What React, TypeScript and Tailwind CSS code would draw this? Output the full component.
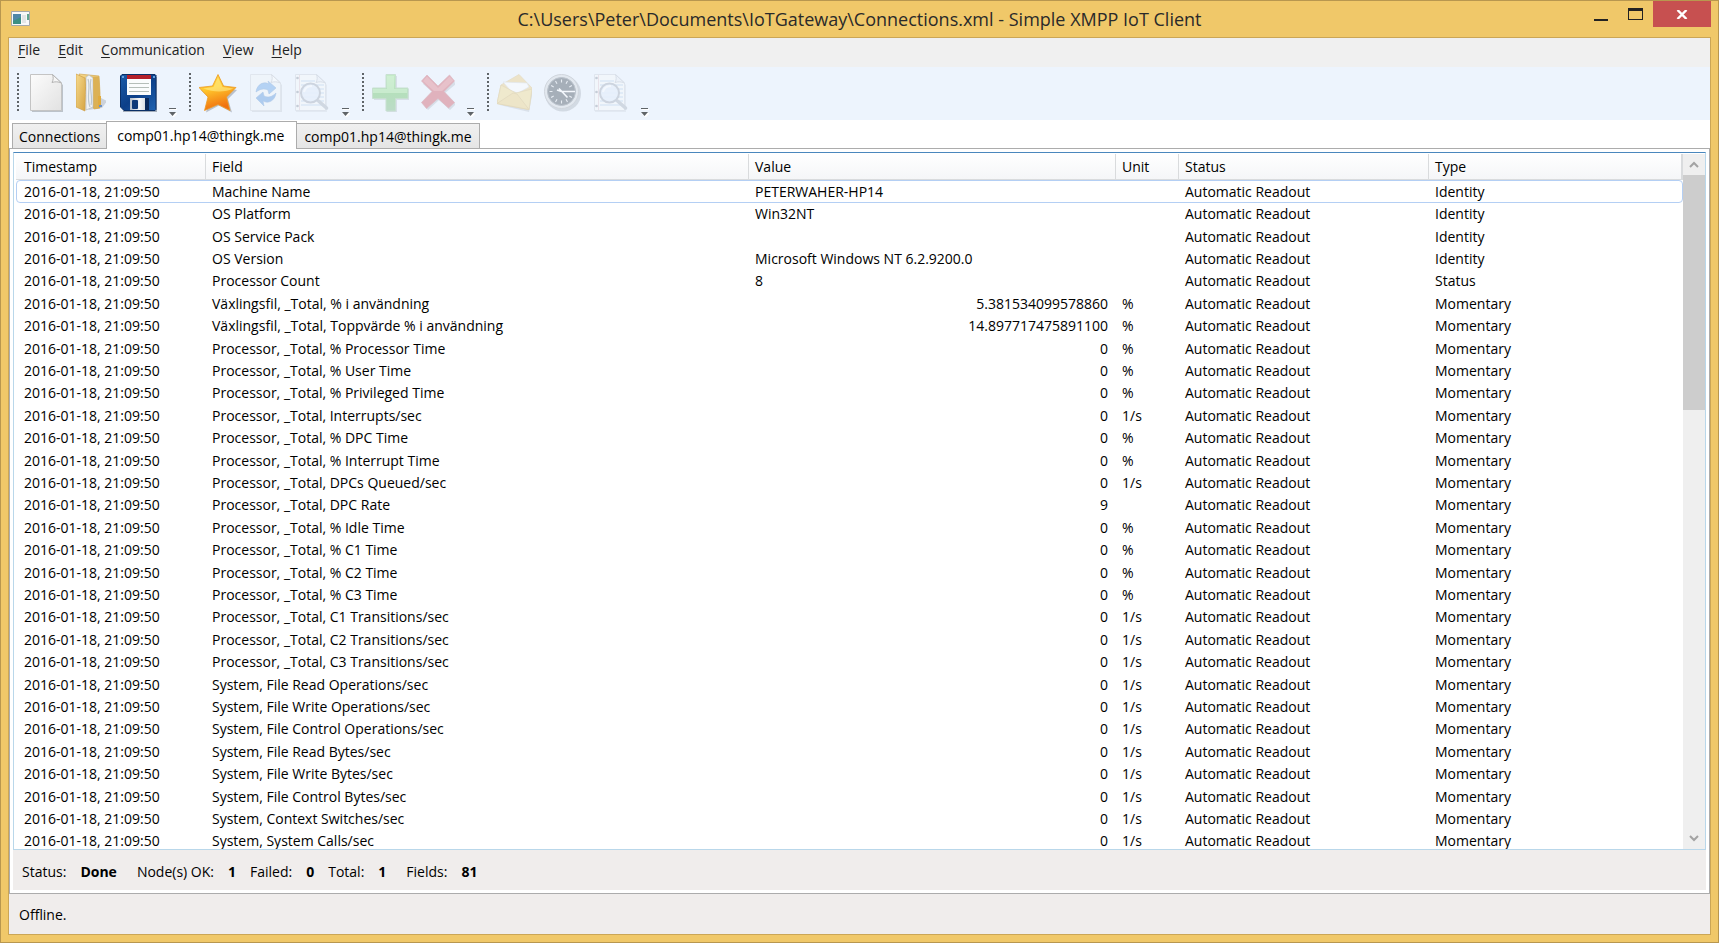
import React from 'react';

type Row = { field: string; value: string; unit: string; type: string; numeric: boolean };

const text = (field: string, value: string, type: string): Row => ({ field, value, unit: '', type, numeric: false });
const num = (field: string, unit: string, value = '0'): Row => ({ field, value, unit, type: 'Momentary', numeric: true });

const rows: Row[] = [
  text('Machine Name', 'PETERWAHER-HP14', 'Identity'),
  text('OS Platform', 'Win32NT', 'Identity'),
  text('OS Service Pack', '', 'Identity'),
  text('OS Version', 'Microsoft Windows NT 6.2.9200.0', 'Identity'),
  text('Processor Count', '8', 'Status'),
  num('Växlingsfil, _Total, % i användning', '%', '5.381534099578860'),
  num('Växlingsfil, _Total, Toppvärde % i användning', '%', '14.897717475891100'),
  num('Processor, _Total, % Processor Time', '%'),
  num('Processor, _Total, % User Time', '%'),
  num('Processor, _Total, % Privileged Time', '%'),
  num('Processor, _Total, Interrupts/sec', '1/s'),
  num('Processor, _Total, % DPC Time', '%'),
  num('Processor, _Total, % Interrupt Time', '%'),
  num('Processor, _Total, DPCs Queued/sec', '1/s'),
  num('Processor, _Total, DPC Rate', '', '9'),
  num('Processor, _Total, % Idle Time', '%'),
  num('Processor, _Total, % C1 Time', '%'),
  num('Processor, _Total, % C2 Time', '%'),
  num('Processor, _Total, % C3 Time', '%'),
  num('Processor, _Total, C1 Transitions/sec', '1/s'),
  num('Processor, _Total, C2 Transitions/sec', '1/s'),
  num('Processor, _Total, C3 Transitions/sec', '1/s'),
  num('System, File Read Operations/sec', '1/s'),
  num('System, File Write Operations/sec', '1/s'),
  num('System, File Control Operations/sec', '1/s'),
  num('System, File Read Bytes/sec', '1/s'),
  num('System, File Write Bytes/sec', '1/s'),
  num('System, File Control Bytes/sec', '1/s'),
  num('System, Context Switches/sec', '1/s'),
  num('System, System Calls/sec', '1/s'),
];

const menus = ['File', 'Edit', 'Communication', 'View', 'Help'];
const columns = ['Timestamp', 'Field', 'Value', 'Unit', 'Status', 'Type'];

function NewIcon() {
  return (
    <svg width="37" height="40" viewBox="0 0 37 40">
      <defs>
        <linearGradient id="paper" x1="0" y1="0" x2="1" y2="1">
          <stop offset="0" stopColor="#fcfcfc" />
          <stop offset="1" stopColor="#e2e2e2" />
        </linearGradient>
      </defs>
      <path d="M5 3h22l9 9v27H5z" fill="#8a8f98" opacity=".5" />
      <path d="M3.500 1.500h22l9 8.500v27.500h-31z" fill="url(#paper)" stroke="#c4c4c4" />
      <path d="M25.500 1.500c1 3 1 5-.5 8 3-1 6-1 9.500.5z" fill="#f6f6f6" stroke="#b3b3b3" />
    </svg>
  );
}

function OpenIcon() {
  return (
    <svg width="30" height="40" viewBox="0 0 30 40">
      <defs>
        <linearGradient id="folder" x1="0" y1="0" x2="1" y2="1">
          <stop offset="0" stopColor="#f7da8d" />
          <stop offset="1" stopColor="#d5a443" />
        </linearGradient>
      </defs>
      <path d="M12 37l14-2 5-7-6-3z" fill="#9aa0a8" opacity=".4" />
      <path d="M3 1l20 2 1 17v15l-6 1z" fill="url(#folder)" stroke="#d3a954" strokeWidth=".7" />
      <path d="M10 4l3-2 4 3v29l-7 3z" fill="#f0f2f4" stroke="#b3bac0" strokeWidth=".7" />
      <path d="M12 6c3 9-2 18 2 28M15 6c-2 9 2 18 0 26" stroke="#bcc7cf" strokeWidth="1.200" fill="none" />
      <path d="M17 4h6l1 17-2 14-4 1z" fill="#dcb155" />
      <path d="M0 1l9 4c1 11 0 22 0 33l-9-4z" fill="url(#folder)" stroke="#cfa04a" strokeWidth=".7" />
      <path d="M22 23h3v9l-2 3h-1z" fill="#e0ab3f" />
      <path d="M23 32h3v2h-3z" fill="#6d92c9" />
    </svg>
  );
}

function SaveIcon() {
  return (
    <svg width="39" height="40" viewBox="0 0 39 40">
      <defs>
        <linearGradient id="disk" x1="0" y1="0" x2="1" y2="1">
          <stop offset="0" stopColor="#1b5ca8" />
          <stop offset=".5" stopColor="#0c3f88" />
          <stop offset="1" stopColor="#1e62b1" />
        </linearGradient>
        <linearGradient id="shutter" x1="0" y1="0" x2="1" y2="0">
          <stop offset="0" stopColor="#b5bfca" />
          <stop offset=".5" stopColor="#f6f8fa" />
          <stop offset="1" stopColor="#c3cbd4" />
        </linearGradient>
      </defs>
      <path d="M4 4h35v35H5z" fill="#5c6675" opacity=".5" />
      <path d="M4 1.500h33l1 1v34l-1 1H6l-3.500-3.500V3z" fill="url(#disk)" stroke="#0a2f66" />
      <path d="M9 2h24v20H9z" fill="#fafcfd" />
      <path d="M9 2h24v4H9z" fill="#b3202a" />
      <path d="M11 10.500h20M11 14.500h20M11 18.500h20" stroke="#b5beb9" />
      <path d="M12 25h19v12H12z" fill="url(#shutter)" />
      <rect x="14" y="27" width="6" height="9" rx="1" fill="#0f3a78" />
      <path d="M27 25h4v12h-4z" fill="#08285a" />
      <path d="M4 3h2v2H4zM35 3h2v2h-2z" fill="#65a0dc" />
    </svg>
  );
}

function StarIcon() {
  return (
    <svg width="38" height="40" viewBox="0 0 38 40">
      <defs>
        <linearGradient id="star" x1="0" y1="0" x2=".3" y2="1">
          <stop offset="0" stopColor="#ffd23c" />
          <stop offset=".45" stopColor="#ffc62c" />
          <stop offset="1" stopColor="#f0700f" />
        </linearGradient>
      </defs>
      <path d="M20 4l6 11 12 2-9 9 4 13.500-13-7-13 7 4-13.500L2 17l13-2z" fill="#6b7280" opacity=".4" />
      <path d="M19 1.500L24.500 13l12.500 1.500-9.500 9.500L31 37.500 19 31.500 5.500 37.500 9 24 0 14.500 13.500 13z" fill="url(#star)" stroke="#ec9a26" strokeWidth=".8" strokeLinejoin="round" />
      <path d="M19 4l4.500 10 11 1.500C27 19 16 20 4 15.500L14.500 14z" fill="#ffec8b" opacity=".6" />
    </svg>
  );
}

function RefreshIcon() {
  return (
    <svg width="33" height="40" viewBox="0 0 33 40" opacity=".38">
      <path d="M2 3h22l9 9v27H3z" fill="#9da4ae" opacity=".5" />
      <path d="M1.500 1.500h21l9 8.500v27.500h-30z" fill="#f2f4f7" stroke="#ccd0d6" />
      <path d="M22.500 1.500c1 3 1 5-.5 8 3-1 6-1 9.500.5z" fill="#fff" stroke="#b8bcc3" />
      <path d="M7 19c1-8 8-11 13-8l-1-3 8 7-7 6-1-4c-4-2-8-1-12 2z" fill="#5a9de6" stroke="#4d87c6" strokeWidth=".6" />
      <path d="M27 20c-1 8-8 11-13 8l1 5-8-8 7-6 1 4c4 2 8 1 12-3z" fill="#4a8ddb" stroke="#4d87c6" strokeWidth=".6" />
    </svg>
  );
}

function InspectIcon() {
  return (
    <svg width="36" height="40" viewBox="0 0 36 40" opacity=".34">
      <path d="M3 3h21l9 9v27H2z" fill="#9da4ae" opacity=".4" />
      <path d="M1.500 1.500h21l9 8.500v27.500h-30z" fill="#fafafa" stroke="#c5cad3" />
      <path d="M22.500 1.500c1 3 1 5-.5 8 3-1 6-1 9.500.5z" fill="#e8ecf2" stroke="#aeb5c0" />
      <path d="M7 8h14M7 12h23M7 16h23M7 20h23M7 24h23M7 28h23M7 32h23" stroke="#98bbe2" />
      <path d="M5.500 2v35" stroke="#d6a6b0" strokeWidth=".7" />
      <g fill="#7b838f"><circle cx="3.500" cy="5" r="1.300" /><circle cx="3.500" cy="19" r="1.300" /><circle cx="3.500" cy="33" r="1.300" /></g>
      <path d="M24.500 28l8 7" stroke="#9aa3af" strokeWidth="3.500" strokeLinecap="round" />
      <circle cx="16.500" cy="20" r="9.500" fill="#dce9f8" fillOpacity=".9" stroke="#9099a6" strokeWidth="2" />
      <path d="M10 19c1-4 4-6 8-6" fill="none" stroke="#fff" strokeWidth="2" />
    </svg>
  );
}

function AddIcon() {
  return (
    <svg width="37" height="40" viewBox="0 0 37 40" opacity=".4">
      <defs>
        <linearGradient id="plus" x1="0" y1="0" x2="0" y2="1">
          <stop offset="0" stopColor="#8be07d" />
          <stop offset=".5" stopColor="#63c25c" />
          <stop offset="1" stopColor="#74b77a" />
        </linearGradient>
      </defs>
      <path d="M15 3h10v13h12v11H25v12H15V27H2V16h13z" fill="#67727f" opacity=".4" />
      <path d="M14 1.500h9.500V15H36v10.500H23.500V38H14V25.500H.5V15H14z" fill="url(#plus)" stroke="#93c492" />
      <path d="M15 3h7v13h13v4H1v-4h14z" fill="#b6f1a8" opacity=".6" />
    </svg>
  );
}

function DeleteIcon() {
  return (
    <svg width="34" height="40" viewBox="0 0 34 40" opacity=".4">
      <path d="M7 4l11 11L29 4l6 7-11 9 11 11-6 6-11-10L7 37l-5-6 11-11L2 11z" fill="#67727f" opacity=".4" />
      <path d="M6 2l11 11L28.500 2l5 6L23 18.500l10.500 11-6 5.500L17 25.500 5.500 35.500l-5-6L11 18.500.5 8z" fill="#cf5260" stroke="#c4636e" strokeWidth=".7" />
      <path d="M6 3.500L17 15 28.500 3.500l4 4L21 18H13L2 8z" fill="#ea8a90" opacity=".65" />
    </svg>
  );
}

function MailIcon() {
  return (
    <svg width="35" height="40" viewBox="0 0 35 40" opacity=".4">
      <path d="M3 32l29 7 4-22-4-2z" fill="#7b818b" opacity=".4" />
      <path d="M4 12L22 1.500 35 15l-3 21.500L0 30.500z" fill="#eccb7c" stroke="#d9bc77" strokeWidth=".8" />
      <path d="M6 9l24 1 2 4-11 6-7-2z" fill="#fff" stroke="#cfd2d6" strokeWidth=".7" />
      <path d="M4 12l15 8 16-4-3 20.500-32-6z" fill="#f2d987" stroke="#d3b468" strokeWidth=".7" />
      <path d="M0 30.500L16 20l4 1 12 15.500z" fill="#eed07a" stroke="#cfae60" strokeWidth=".7" />
    </svg>
  );
}

function ClockIcon() {
  return (
    <svg width="37" height="40" viewBox="0 0 37 40" opacity=".4">
      <circle cx="19" cy="20.500" r="18" fill="#6c7380" opacity=".5" />
      <circle cx="17.500" cy="18.500" r="17" fill="#d4d8dc" stroke="#a4a8ad" />
      <circle cx="17.500" cy="18.500" r="14" fill="#3f4a56" stroke="#747d86" />
      <path d="M17.500 6.500v3M17.500 27.500v3M5.500 18.500h3M11.500 8.100l1.500 2.600M7.100 12.500l2.600 1.500M7.100 24.500l2.600-1.500M11.500 28.900l1.500-2.600M23.500 28.900l-1.500-2.600M27.900 24.500l-2.600-1.500M27.900 12.500l-2.600 1.500M23.500 8.100l-1.500 2.600" stroke="#dfe3e6" strokeWidth="1.100" />
      <path d="M13 17l4.500 1.500h13.500M15 15.500l8.500 9" stroke="#fff" strokeWidth="1.600" fill="none" />
    </svg>
  );
}

const toolbars: { label: string; Icon: () => React.JSX.Element }[][] = [
  [
    { label: 'New', Icon: NewIcon },
    { label: 'Open', Icon: OpenIcon },
    { label: 'Save', Icon: SaveIcon },
  ],
  [
    { label: 'Connect', Icon: StarIcon },
    { label: 'Refresh', Icon: RefreshIcon },
    { label: 'Sniff', Icon: InspectIcon },
  ],
  [
    { label: 'Add', Icon: AddIcon },
    { label: 'Delete', Icon: DeleteIcon },
  ],
  [
    { label: 'Read momentary', Icon: MailIcon },
    { label: 'Read history', Icon: ClockIcon },
    { label: 'Inspect', Icon: InspectIcon },
  ],
];

function Grip() {
  return (
    <svg className="mr-0.5 shrink-0" width="2" height="38" viewBox="0 0 2 38">
      <path d="M1 0v38" stroke="#5f6468" strokeWidth="2" strokeDasharray="2 2" />
    </svg>
  );
}

function Toolbar({ items }: { items: { label: string; Icon: () => React.JSX.Element }[] }) {
  return (
    <div role="toolbar" className="mr-3 flex h-11">
      <Grip />
      {items.map(({ label, Icon }) => (
        <button key={label} aria-label={label} className="h-10 px-1.5">
          <Icon />
        </button>
      ))}
      <button aria-label="More" className="ml-1.5 self-end">
        <svg width="8" height="9" viewBox="0 0 8 9">
          <path d="M1 1.500h7M1 5.500h7L4.500 9z" fill="#fff" stroke="#fff" />
          <path d="M0 .5h7" stroke="#5f6468" />
          <path d="M0 4h7L3.500 8z" fill="#5f6468" />
        </svg>
      </button>
    </div>
  );
}

function Stat({ label, value, className }: { label: string; value: string; className: string }) {
  return (
    <div className={`flex gap-3.5 ${className}`}>
      <span>{label}</span>
      <b>{value}</b>
    </div>
  );
}

export default function App() {
  return (
    <div className="flex h-screen flex-col border border-[#b8974f] bg-[#f0c869] px-[7px] pb-[7px] font-['Open_Sans','Noto_Sans',sans-serif] text-sm leading-5 text-black">
      <header className="grid h-9 shrink-0 grid-cols-[1fr_auto_1fr]">
        <div className="pt-2.5 pl-[3px]">
          <svg width="19" height="15" viewBox="0 0 19 15">
            <path d="M.5.500h18v14H.5z" fill="#f8f8f8" stroke="#a5a8aa" />
            <path d="M2 3h8v10H2z" fill="#3c8f83" />
            <path d="M2 3h8v3l-8 4z" fill="#4f87a8" />
            <path d="M11 4h4v8h-4z" fill="#e3e5e6" />
            <path d="M16 3h2v6h-2z" fill="#5fa58e" />
          </svg>
        </div>
        <h1 className="pt-1.5 text-lg leading-6 text-[#2a2a2a]">C:\Users\Peter\Documents\IoTGateway\Connections.xml - Simple XMPP IoT Client</h1>
        <div className="flex items-start justify-end">
          <button aria-label="Minimize" className="flex h-[26px] w-8 items-center justify-center">
            <svg width="14" height="14" viewBox="0 0 14 14"><path d="M0 12h14v2H0z" fill="#222" /></svg>
          </button>
          <button aria-label="Maximize" className="flex h-[26px] w-9 items-center justify-center">
            <svg width="15" height="12" viewBox="0 0 15 12"><path d="M0 0h15v12H0zM1 3v8h13V3z" fill="#222" fillRule="evenodd" /></svg>
          </button>
          <button aria-label="Close" className="flex h-[26px] w-[58px] items-center justify-center bg-[#c75050]">
            <svg width="12" height="9" viewBox="0 0 12 9"><path d="M1.500 0l9 9M10.500 0l-9 9" stroke="#fff" strokeWidth="2.400" /></svg>
          </button>
        </div>
      </header>

      <div className="flex min-h-0 flex-1 flex-col border border-[#cba656] bg-[#f0edec]">
        <nav className="flex h-[29px] shrink-0 items-start bg-[#f0f0f0] pt-0.5 text-[#222]">
          {menus.map((m) => (
            <button key={m} className="px-[9px]">
              <span className="underline underline-offset-2">{m[0]}</span>{m.slice(1)}
            </button>
          ))}
        </nav>

        <div className="flex h-[53px] shrink-0 items-start bg-[#edf4fd] pt-1.5 pl-2">
          {toolbars.map((items, i) => (
            <Toolbar key={i} items={items} />
          ))}
        </div>

        <div role="tablist" className="flex h-7 shrink-0 items-end bg-white pl-[3px]">
          <button role="tab" aria-selected="false" className="h-[25px] border border-b-0 border-[#acacac] bg-linear-to-b from-[#f0f0f0] to-[#e5e5e5] px-1.5 pt-0.5">Connections</button>
          <button role="tab" aria-selected="true" className="z-10 -mx-px -mb-px h-7 border border-b-0 border-[#acacac] bg-white pr-3 pl-2.5">comp01.hp14@thingk.me</button>
          <button role="tab" aria-selected="false" className="h-[25px] border border-b-0 border-[#acacac] bg-linear-to-b from-[#f0f0f0] to-[#e5e5e5] px-[7px] pt-0.5">comp01.hp14@thingk.me</button>
        </div>

        <main className="flex min-h-0 flex-1 flex-col border border-[#acacac] bg-white p-[3px]">
          <section className="flex min-h-0 flex-1 border border-[#b9d7ea] border-t-[#4a87bd] pt-px">
            <div className="min-w-0 flex-1 overflow-hidden pl-0.5">
              <table className="w-full table-fixed border-separate border-spacing-0 text-left whitespace-nowrap">
                <colgroup>
                  <col className="w-[190px]" />
                  <col />
                  <col className="w-[367px]" />
                  <col className="w-[63px]" />
                  <col className="w-[250px]" />
                  <col className="w-[254px]" />
                </colgroup>
                <thead>
                  <tr className="h-[26px]">
                    {columns.map((c) => (
                      <th key={c} className="border-r border-b border-[#d9dbdd] bg-linear-to-b from-white to-[#f5f6f8] p-0 pl-1.5 font-normal first:pl-2 last:border-r-2">{c}</th>
                    ))}
                  </tr>
                </thead>
                <tbody>
                  {rows.map((r) => (
                    <tr key={r.field} className="h-[22px] rounded-sm -outline-offset-1 first:outline first:outline-[#b4cff4] nth-[5n+1]:h-[23px] nth-[5n+3]:h-[23px]">
                      <td className="p-0 pl-2">2016-01-18, 21:09:50</td>
                      <td className="p-0 pl-1.5">{r.field}</td>
                      <td className={r.numeric ? 'p-0 pr-2 text-right' : 'p-0 pl-1.5'}>{r.value}</td>
                      <td className="p-0 pl-1.5">{r.unit}</td>
                      <td className="p-0 pl-1.5">Automatic Readout</td>
                      <td className="p-0 pl-1.5">{r.type}</td>
                    </tr>
                  ))}
                </tbody>
              </table>
            </div>
            <div className="flex w-[22px] shrink-0 flex-col bg-[#efefef]">
              <button aria-label="Scroll up" className="flex h-[21px] items-center justify-center">
                <svg width="10" height="7" viewBox="0 0 10 7"><path d="M1 6l4-4 4 4" fill="none" stroke="#a3a3a3" strokeWidth="2" /></svg>
              </button>
              <div className="min-h-0 flex-1">
                <div className="h-[36%] bg-[#cdcdcd]" />
              </div>
              <button aria-label="Scroll down" className="flex h-[21px] items-center justify-center">
                <svg width="10" height="7" viewBox="0 0 10 7"><path d="M1 1l4 4 4-4" fill="none" stroke="#a3a3a3" strokeWidth="2" /></svg>
              </button>
            </div>
          </section>
          <div className="flex h-10 shrink-0 items-center bg-[#f0edec] pt-1 pb-px pl-[9px]">
            <Stat label="Status:" value="Done" className="mr-5" />
            <Stat label="Node(s) OK:" value="1" className="mr-3.5" />
            <Stat label="Failed:" value="0" className="mr-3.5" />
            <Stat label="Total:" value="1" className="mr-5" />
            <Stat label="Fields:" value="81" className="" />
          </div>
        </main>

        <footer className="flex h-10 shrink-0 items-center pt-0.5 pl-2.5">Offline.</footer>
      </div>
    </div>
  );
}
